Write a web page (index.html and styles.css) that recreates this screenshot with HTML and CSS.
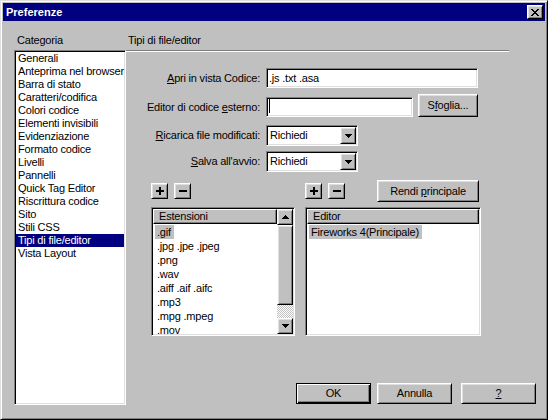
FILE: index.html
```html
<!DOCTYPE html>
<html lang="it">
<head>
<meta charset="utf-8">
<title>Preferenze</title>
<link rel="stylesheet" href="styles.css">
</head>
<body>
<div class="window">
  <div class="titlebar">
    <span class="title">Preferenze</span>
    <div class="btn close">
      <svg width="8" height="7" viewBox="0 0 8 7" shape-rendering="crispEdges">
        <rect x="0" y="0" width="2" height="1"/><rect x="6" y="0" width="2" height="1"/>
        <rect x="1" y="1" width="2" height="1"/><rect x="5" y="1" width="2" height="1"/>
        <rect x="2" y="2" width="4" height="1"/>
        <rect x="3" y="3" width="2" height="1"/>
        <rect x="2" y="4" width="4" height="1"/>
        <rect x="1" y="5" width="2" height="1"/><rect x="5" y="5" width="2" height="1"/>
        <rect x="0" y="6" width="2" height="1"/><rect x="6" y="6" width="2" height="1"/>
      </svg>
    </div>
  </div>
  <div class="body">
    <div class="cat-col">
      <div class="label cat-label">Categoria</div>
      <ul class="cat-list sunken">
        <li>Generali</li>
        <li>Anteprima nel browser</li>
        <li>Barra di stato</li>
        <li>Caratteri/codifica</li>
        <li>Colori codice</li>
        <li>Elementi invisibili</li>
        <li>Evidenziazione</li>
        <li>Formato codice</li>
        <li>Livelli</li>
        <li>Pannelli</li>
        <li>Quick Tag Editor</li>
        <li>Riscrittura codice</li>
        <li>Sito</li>
        <li>Stili CSS</li>
        <li class="selected">Tipi di file/editor</li>
        <li>Vista Layout</li>
      </ul>
    </div>
    <div class="main-col">
      <div class="label heading">Tipi di file/editor</div>
      <div class="sep"></div>

      <div class="row r1">
        <span class="lbl h20"><u>A</u>pri in vista Codice:</span>
        <div class="input sunken w-long"><span>.js .txt .asa</span></div>
      </div>
      <div class="row r2">
        <span class="lbl h20">Editor di codice <u>e</u>sterno:</span>
        <div class="input sunken w-short"><span class="caret"></span></div>
        <div class="btn push sfoglia"><span>S<u>f</u>oglia...</span></div>
      </div>
      <div class="row r3">
        <span class="lbl h21"><u>R</u>icarica file modificati:</span>
        <div class="select sunken">
          <span class="sel-text">Richiedi</span>
          <div class="btn drop">
            <svg width="7" height="4" viewBox="0 0 7 4" shape-rendering="crispEdges">
              <rect x="0" y="0" width="7" height="1"/><rect x="1" y="1" width="5" height="1"/>
              <rect x="2" y="2" width="3" height="1"/><rect x="3" y="3" width="1" height="1"/>
            </svg>
          </div>
        </div>
      </div>
      <div class="row r4">
        <span class="lbl h21"><u>S</u>alva all'avvio:</span>
        <div class="select sunken">
          <span class="sel-text">Richiedi</span>
          <div class="btn drop">
            <svg width="7" height="4" viewBox="0 0 7 4" shape-rendering="crispEdges">
              <rect x="0" y="0" width="7" height="1"/><rect x="1" y="1" width="5" height="1"/>
              <rect x="2" y="2" width="3" height="1"/><rect x="3" y="3" width="1" height="1"/>
            </svg>
          </div>
        </div>
      </div>

      <div class="tools">
        <div class="btn pm">
          <svg width="8" height="8" viewBox="0 0 8 8" shape-rendering="crispEdges"><rect x="0" y="3" width="8" height="2"/><rect x="3" y="0" width="2" height="8"/></svg>
        </div>
        <div class="btn pm minus">
          <svg width="8" height="2" viewBox="0 0 8 2" shape-rendering="crispEdges"><rect x="0" y="0" width="8" height="2"/></svg>
        </div>
        <div class="btn pm right-plus">
          <svg width="8" height="8" viewBox="0 0 8 8" shape-rendering="crispEdges"><rect x="0" y="3" width="8" height="2"/><rect x="3" y="0" width="2" height="8"/></svg>
        </div>
        <div class="btn pm minus">
          <svg width="8" height="2" viewBox="0 0 8 2" shape-rendering="crispEdges"><rect x="0" y="0" width="8" height="2"/></svg>
        </div>
        <div class="btn push rendi"><span>Rendi <u>p</u>rincipale</span></div>
      </div>

      <div class="lists">
        <div class="listview sunken ext">
          <div class="lv-main">
            <div class="lv-header">Estensioni</div>
            <div class="lv-items">
              <div class="lv-item"><span class="hl">.gif</span></div>
              <div class="lv-item"><span>.jpg .jpe .jpeg</span></div>
              <div class="lv-item"><span>.png</span></div>
              <div class="lv-item"><span>.wav</span></div>
              <div class="lv-item"><span>.aiff .aif .aifc</span></div>
              <div class="lv-item"><span>.mp3</span></div>
              <div class="lv-item"><span>.mpg .mpeg</span></div>
              <div class="lv-item"><span>.mov</span></div>
            </div>
          </div>
          <div class="scrollbar">
            <div class="btn sb-btn">
              <svg width="7" height="4" viewBox="0 0 7 4" shape-rendering="crispEdges">
                <rect x="3" y="0" width="1" height="1"/><rect x="2" y="1" width="3" height="1"/>
                <rect x="1" y="2" width="5" height="1"/><rect x="0" y="3" width="7" height="1"/>
              </svg>
            </div>
            <div class="btn sb-thumb"></div>
            <div class="sb-track"></div>
            <div class="btn sb-btn">
              <svg width="7" height="4" viewBox="0 0 7 4" shape-rendering="crispEdges">
                <rect x="0" y="0" width="7" height="1"/><rect x="1" y="1" width="5" height="1"/>
                <rect x="2" y="2" width="3" height="1"/><rect x="3" y="3" width="1" height="1"/>
              </svg>
            </div>
          </div>
        </div>
        <div class="listview sunken editor">
          <div class="lv-main">
            <div class="lv-header">Editor</div>
            <div class="lv-items">
              <div class="lv-item"><span class="hl">Fireworks 4(Principale)</span></div>
            </div>
          </div>
        </div>
      </div>

      <div class="footer">
        <div class="btn push default ok"><span>OK</span></div>
        <div class="btn push annulla"><span>Annulla</span></div>
        <div class="btn push help"><span><u>?</u></span></div>
      </div>
    </div>
  </div>
</div>
</body>
</html>
```

FILE: styles.css
```css
* {
  box-sizing: border-box;
  margin: 0;
  padding: 0;
}

html, body {
  width: 548px;
  height: 420px;
  overflow: hidden;
}

body {
  background: #c0c0c0;
  font-family: "Liberation Sans", Arial, sans-serif;
  font-size: 11px;
  letter-spacing: -0.2px;
  color: #000;
}

u {
  text-decoration: underline;
  text-underline-offset: 1px;
}

.window {
  width: 548px;
  height: 420px;
  background: #c0c0c0;
  border: 1px solid;
  border-color: #dfdfdf #000 #000 #dfdfdf;
  box-shadow: inset 1px 1px 0 #fff, inset -1px -1px 0 #808080;
  padding: 2px;
  display: flex;
  flex-direction: column;
}

.titlebar {
  height: 18px;
  flex: none;
  background: #000080;
  color: #fff;
  display: flex;
  align-items: center;
  justify-content: space-between;
  padding-left: 3px;
  padding-right: 2px;
}

.title {
  font-weight: bold;
  line-height: 18px;
  letter-spacing: 0;
}

.btn {
  background: #c0c0c0;
  border: 1px solid;
  border-color: #fff #000 #000 #fff;
  box-shadow: inset 1px 1px 0 #dfdfdf, inset -1px -1px 0 #808080;
  display: flex;
  align-items: center;
  justify-content: center;
  flex: none;
  color: #000;
}

.btn svg {
  display: block;
  fill: #000;
}

.close {
  width: 16px;
  height: 14px;
}

.sunken {
  border: 1px solid;
  border-color: #808080 #fff #fff #808080;
  box-shadow: inset 1px 1px 0 #000, inset -1px -1px 0 #dfdfdf;
  background: #fff;
}

.body {
  display: flex;
  flex: 1;
}

.cat-col {
  width: 123px;
  flex: none;
  padding-left: 11px;
}

.label {
  margin-top: 13px;
  height: 13px;
  line-height: 13px;
  white-space: nowrap;
}

.cat-label {
  padding-left: 3px;
}

.cat-list {
  list-style: none;
  margin-top: 3px;
  width: 112px;
  height: 355px;
  padding: 1px;
  overflow: hidden;
}

.cat-list li {
  height: 13px;
  line-height: 13px;
  padding-left: 2px;
  white-space: nowrap;
}

.cat-list li.selected {
  background: #000080;
  color: #fff;
}

.main-col {
  flex: 1;
  display: flex;
  flex-direction: column;
}

.heading {
  padding-left: 2px;
}

.sep {
  margin-top: 3px;
  width: 383px;
  height: 2px;
  border-top: 1px solid #808080;
  border-bottom: 1px solid #fff;
}

.row {
  display: flex;
  align-items: flex-end;
}

.r1 { margin-top: 16px; }
.r2 { margin-top: 6px; }
.r3 { margin-top: 8px; }
.r4 { margin-top: 5px; }

.lbl {
  width: 134px;
  margin-right: 6px;
  text-align: right;
  white-space: nowrap;
}

.h20 { height: 20px; line-height: 20px; }
.h21 { height: 21px; line-height: 21px; }

.input {
  height: 20px;
  padding: 1px 2px;
  line-height: 16px;
  white-space: nowrap;
  display: flex;
  align-items: center;
}

.w-long { width: 212px; }
.w-short { width: 147px; }

.caret {
  display: block;
  width: 1px;
  height: 14px;
  margin-top: -2px;
  background: #000;
}

.push {
  height: 21px;
  line-height: 13px;
  white-space: nowrap;
}

.sfoglia {
  width: 60px;
  height: 23px;
  margin-left: 5px;
}

.select {
  width: 92px;
  height: 21px;
  padding: 1px;
  display: flex;
  justify-content: space-between;
}

.sel-text {
  padding-left: 2px;
  line-height: 17px;
}

.drop {
  width: 16px;
  height: 17px;
}

.tools {
  margin-top: 8px;
  height: 22px;
  padding-left: 25px;
  display: flex;
  align-items: center;
}

.pm {
  width: 17px;
  height: 16px;
}

.pm.minus {
  margin-left: 6px;
}

.pm.right-plus {
  margin-left: 114px;
}

.rendi {
  width: 102px;
  height: 22px;
  margin-left: 32px;
}

.lists {
  margin-top: 5px;
  padding-left: 25px;
  display: flex;
}

.listview {
  height: 129px;
  padding: 1px;
  display: flex;
  overflow: hidden;
}

.listview.ext {
  width: 144px;
}

.listview.editor {
  width: 176px;
  margin-left: 10px;
}

.lv-main {
  flex: 1;
  display: flex;
  flex-direction: column;
  overflow: hidden;
}

.lv-header {
  flex: none;
  height: 15px;
  line-height: 13px;
  padding-left: 5px;
  background: #c0c0c0;
  border: 1px solid;
  border-color: #fff #000 #000 #fff;
  box-shadow: inset -1px -1px 0 #808080;
  white-space: nowrap;
}

.lv-items {
  padding-top: 1px;
  overflow: hidden;
}

.lv-item {
  height: 14px;
  line-height: 14px;
  padding-left: 2px;
  white-space: nowrap;
}

.lv-item span {
  display: inline-block;
  height: 14px;
  padding: 0 3px 0 2px;
}

.lv-item span.hl {
  background: #c0c0c0;
}

.scrollbar {
  width: 16px;
  flex: none;
  display: flex;
  flex-direction: column;
}

.sb-btn {
  width: 16px;
  height: 16px;
}

.sb-thumb {
  width: 16px;
  height: 80px;
}

.sb-track {
  flex: 1;
  background-color: #c0c0c0;
  background-image: conic-gradient(#fff 25%, #c0c0c0 0 50%, #fff 0 75%, #c0c0c0 0);
  background-size: 2px 2px;
}

.footer {
  margin-top: 47px;
  padding-right: 9px;
  display: flex;
  justify-content: flex-end;
}

.footer .push {
  width: 75px;
}

.default {
  border: 1px solid #000;
  box-shadow: inset 1px 1px 0 #fff, inset -1px -1px 0 #000, inset -2px -2px 0 #808080;
}

.annulla {
  margin-left: 6px;
}

.help {
  margin-left: 9px;
}
```
